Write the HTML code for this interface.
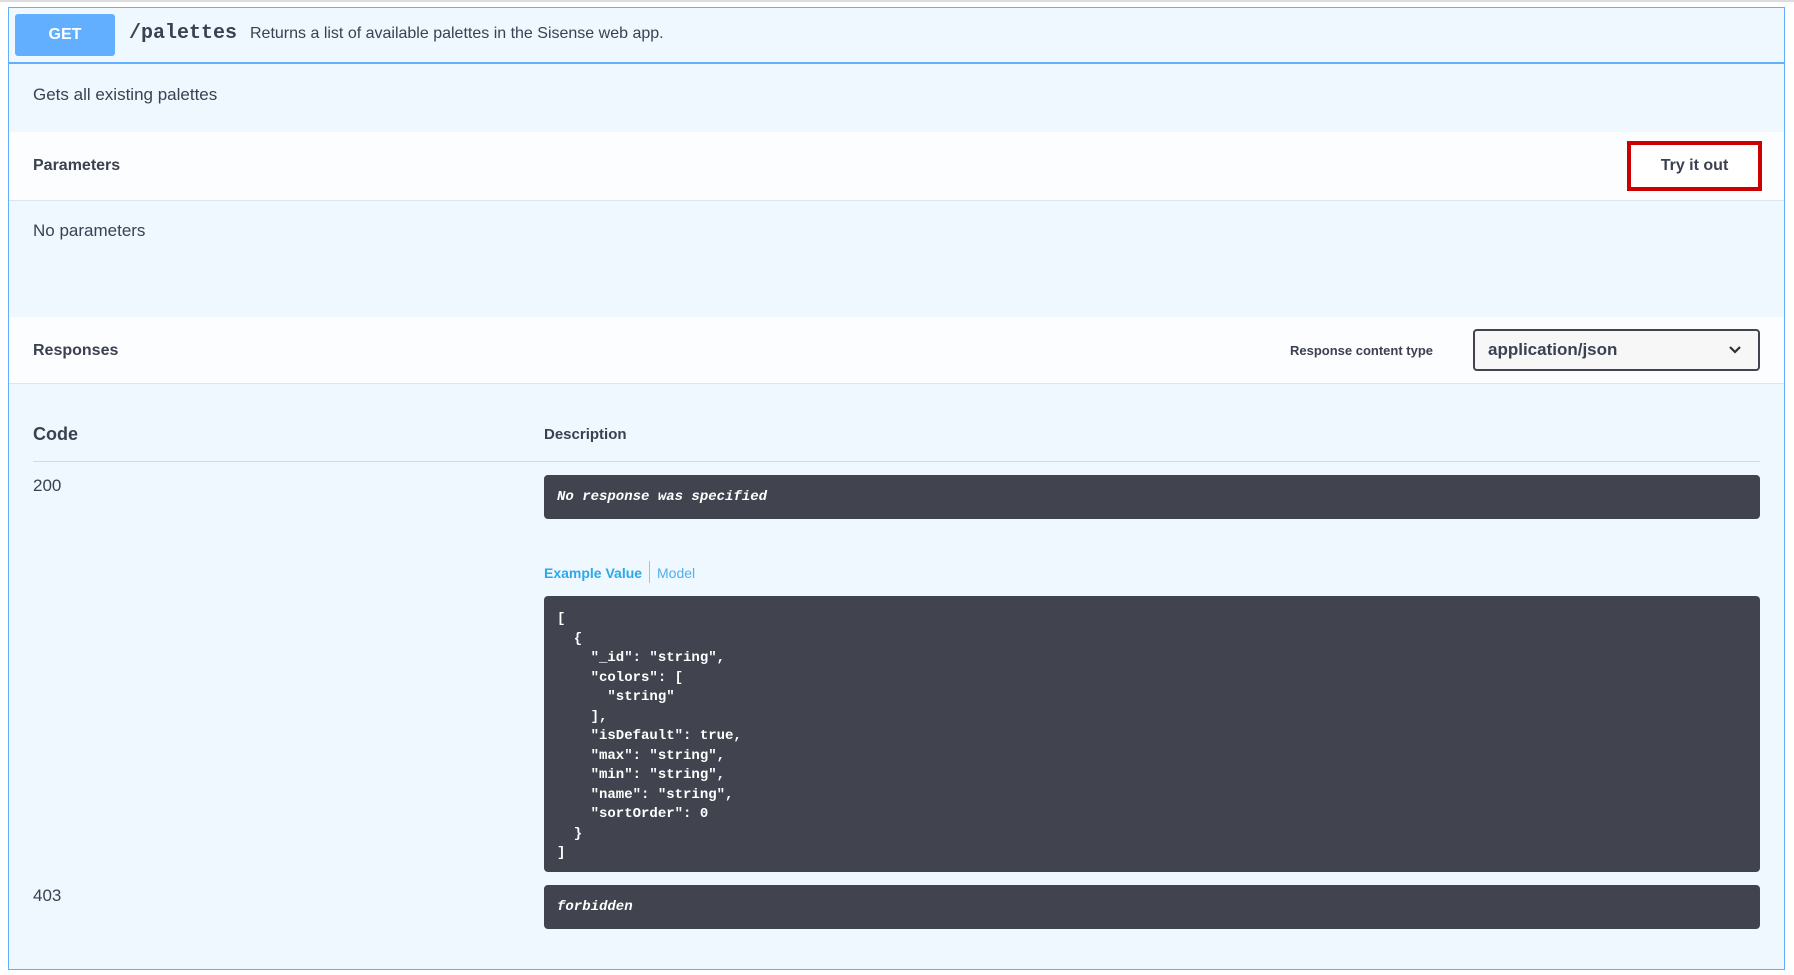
<!DOCTYPE html>
<html><head><meta charset="utf-8"><style>
body{margin:0;width:1794px;height:975px;background:#fff;font-family:"Liberation Sans",sans-serif;color:#3b4151;position:relative;overflow:hidden}
.a{position:absolute}
.box{left:8px;top:7px;width:1777px;height:963px;border:1px solid #61affe;background:#eff7ff;box-sizing:border-box}
.mono{font-family:"Liberation Mono","DejaVu Sans Mono",monospace}
.dk{background:#41444e;border-radius:4px;left:544px;width:1216px;color:#fff}
</style></head><body>
<div class="a" style="left:0;top:0;width:1794px;height:2px;background:#ddd"></div>
<div class="a box"></div>
<div class="a" style="left:9px;top:62px;width:1775px;height:2px;background:#61affe"></div>
<div class="a" style="left:15px;top:14px;width:100px;height:42px;background:#61affe;border-radius:3px;color:#fff;font-weight:bold;font-size:16px;line-height:42px;text-align:center">GET</div>
<div class="a mono" style="left:129px;top:22px;font-size:20px;font-weight:bold;color:#3b4151">/palettes</div>
<div class="a" style="left:250px;top:25px;font-size:16px">Returns a list of available palettes in the Sisense web app.</div>
<div class="a" style="left:33px;top:85px;font-size:17px">Gets all existing palettes</div>
<div class="a" style="left:9px;top:132px;width:1775px;height:68px;background:#fcfdff;border-bottom:1px solid #dfe4ea"></div>
<div class="a" style="left:33px;top:157px;font-size:16px;font-weight:bold">Parameters</div>
<div class="a" style="left:1627px;top:141px;width:135px;height:50px;border:4px solid #c00;box-sizing:border-box;background:#fff;font-weight:bold;font-size:16px;line-height:42px;text-align:center">Try it out</div>
<div class="a" style="left:33px;top:221px;font-size:17px">No parameters</div>
<div class="a" style="left:9px;top:317px;width:1775px;height:66px;background:#fcfdff;border-bottom:1px solid #dfe4ea"></div>
<div class="a" style="left:33px;top:342px;font-size:16px;font-weight:bold">Responses</div>
<div class="a" style="left:1290px;top:343px;width:137px;text-align:right;font-size:13px;font-weight:bold;white-space:nowrap">Response content type</div>
<div class="a" style="left:1473px;top:329px;width:287px;height:42px;border:2px solid #41444e;border-radius:4px;box-sizing:border-box;background:#f7f7f7;font-size:17px;font-weight:bold;line-height:38px;padding-left:13px">application/json
<svg class="a" style="right:16px;top:14px" width="14" height="10" viewBox="0 0 14 10"><path d="M2 2l5 5 5-5" stroke="#303030" stroke-width="2.2" fill="none"/></svg></div>
<div class="a" style="left:33px;top:424px;font-size:18px;font-weight:bold">Code</div>
<div class="a" style="left:544px;top:426px;font-size:15px;font-weight:bold">Description</div>
<div class="a" style="left:33px;top:461px;width:1727px;height:1px;background:#d5d9e0"></div>
<div class="a" style="left:33px;top:476px;font-size:17px">200</div>
<div class="a dk mono" style="top:475px;height:44px;line-height:44px;font-size:14px;font-style:italic;font-weight:bold;padding-left:13px;box-sizing:border-box">No response was specified</div>
<div class="a" style="left:544px;top:565px;font-size:14px;font-weight:bold;color:#2da8e8">Example Value</div>
<div class="a" style="left:649px;top:561px;width:1px;height:22px;background:#bbb"></div>
<div class="a" style="left:657px;top:565px;font-size:14px;color:#4fb0ee">Model</div>
<div class="a dk mono" style="top:596px;height:276px;padding:14px 13px;box-sizing:border-box;font-size:14px;font-weight:bold;line-height:19.5px;white-space:pre">[
  {
    "_id": "string",
    "colors": [
      "string"
    ],
    "isDefault": true,
    "max": "string",
    "min": "string",
    "name": "string",
    "sortOrder": 0
  }
]</div>
<div class="a" style="left:33px;top:886px;font-size:17px">403</div>
<div class="a dk mono" style="top:885px;height:44px;line-height:44px;font-size:14px;font-style:italic;font-weight:bold;padding-left:13px;box-sizing:border-box">forbidden</div>
</body></html>
